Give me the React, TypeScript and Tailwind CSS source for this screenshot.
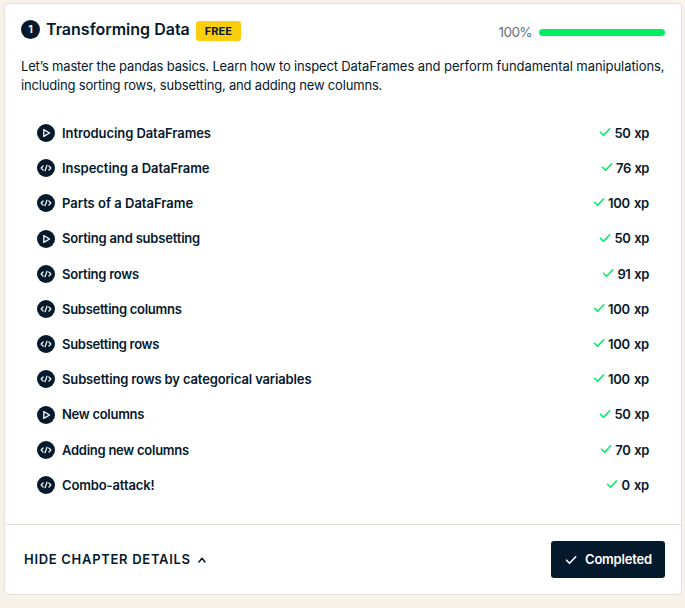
type Lesson = { title: string; xp: number; video?: boolean; fit: string; xpFit: string };

const lessons: Lesson[] = [
  { title: 'Introducing DataFrames', xp: 50, video: true, fit: 'tracking-[-0.08px]', xpFit: 'tracking-[-0.4px]' },
  { title: 'Inspecting a DataFrame', xp: 76, fit: 'tracking-[-0.04px]', xpFit: 'tracking-[-0.5px]' },
  { title: 'Parts of a DataFrame', xp: 100, fit: 'tracking-[0px]', xpFit: 'tracking-[-0.25px]' },
  { title: 'Sorting and subsetting', xp: 50, video: true, fit: 'tracking-[-0.19px]', xpFit: 'tracking-[-0.4px]' },
  { title: 'Sorting rows', xp: 91, fit: 'tracking-[-0.24px]', xpFit: 'tracking-[-0.4px]' },
  { title: 'Subsetting columns', xp: 100, fit: 'tracking-[-0.28px]', xpFit: 'tracking-[-0.25px]' },
  { title: 'Subsetting rows', xp: 100, fit: 'tracking-[-0.3px]', xpFit: 'tracking-[-0.25px]' },
  { title: 'Subsetting rows by categorical variables', xp: 100, fit: 'tracking-[-0.14px]', xpFit: 'tracking-[-0.25px]' },
  { title: 'New columns', xp: 50, video: true, fit: 'tracking-[-0.28px]', xpFit: 'tracking-[-0.4px]' },
  { title: 'Adding new columns', xp: 70, fit: 'tracking-[-0.26px]', xpFit: 'tracking-[-0.4px]' },
  { title: 'Combo-attack!', xp: 0, fit: 'tracking-[-0.13px]', xpFit: 'tracking-[-0.2px]' },
];

function LessonIcon({ video }: { video?: boolean }) {
  return (
    <svg className="mb-px size-[18px] shrink-0" viewBox="0 0 18 18" fill="none" stroke="white" strokeLinejoin="round" strokeLinecap="round">
      <circle cx="9" cy="9" r="9" fill="#05192d" stroke="none" />
      {video ? (
        <path d="M6.8 5.6v6.8L12.6 9z" strokeWidth="1.3" />
      ) : (
        <path d="M6.1 7 4.1 9l2 2M11.9 7 13.9 9l-2 2M10 6.2 8 11.8" strokeWidth="1.2" />
      )}
    </svg>
  );
}

function Check({ className }: { className: string }) {
  return (
    <svg className={className} viewBox="0 0 12 10" fill="none" stroke="currentColor" strokeWidth="1.6" strokeLinecap="round" strokeLinejoin="round">
      <path d="M1.5 5.2 4.5 8.2 10.7 1.8" />
    </svg>
  );
}

export default function App() {
  return (
    <div className="h-[608px] w-[685px] overflow-hidden bg-[#f7f3eb] pt-[3px] pl-1 font-['Inter',sans-serif] text-[#05192d]">
      <section className="flex h-[592px] w-[678px] flex-col rounded-[4px] border border-[#e5e1da] bg-white">
        <header className="flex h-[53px] items-start justify-between px-4 pt-4">
          <div className="flex items-start">
            <span className="flex size-[19px] items-center justify-center rounded-full bg-[#05192d] text-[11px] font-semibold text-white">1</span>
            <h1 className="-mt-px ml-1.5 text-[16px] leading-5 font-semibold whitespace-nowrap">Transforming Data</h1>
            <span className="ml-1.5 mt-px flex h-5 w-[45px] items-center justify-center rounded-[3px] bg-[#fcce0d] text-[11px] font-bold">FREE</span>
          </div>
          <div className="flex items-center pt-0.5">
            <span className="text-[13.5px] leading-5 tracking-[-0.6px] text-[#65707c]">100%</span>
            <span className="ml-[7px] h-[7px] w-[126px] rounded-full bg-[#03ef62]" />
          </div>
        </header>
        <p className="h-[59px] pl-4 text-[13px] leading-[19px] whitespace-nowrap">
          <span className="block">
            <span className="tracking-[-0.175px]">Let’s master the pandas basics. Learn how to inspect </span>
            <span className="tracking-[-0.065px]">DataFrames and perform fundamental manipulations,</span>
          </span>
          <span className="block tracking-[-0.18px]">including sorting rows, subsetting, and adding new columns.</span>
        </p>
        <ul className="flex flex-1 flex-col pr-8 pl-8">
          {lessons.map((l) => (
            <li key={l.title} className="flex h-[35.2px] items-center text-[13px] font-semibold whitespace-nowrap">
              <LessonIcon video={l.video} />
              <span className={`ml-[7px] ${l.fit}`}>{l.title}</span>
              <Check className="mr-[3.5px] mb-[3px] ml-auto h-[10px] w-3 text-[#03ef62]" />
              <span className={`[word-spacing:1px] ${l.xpFit}`}>{l.xp} xp</span>
            </li>
          ))}
        </ul>
        <footer className="flex h-[70px] items-center justify-between border-t border-[#e5e1da] pr-4 pl-[19px]">
          <button className="flex items-center text-[13px] font-semibold whitespace-nowrap">
            <span className="tracking-[0.7px]">HIDE CHAPTER DETAILS</span>
            <svg className="ml-[7px] h-[6px] w-2" viewBox="0 0 8 6" fill="none" stroke="currentColor" strokeWidth="1.5" strokeLinecap="round" strokeLinejoin="round">
              <path d="M1 5 4 1.3 7 5" />
            </svg>
          </button>
          <button className="flex h-[37px] w-[114px] items-center rounded-[3px] bg-[#05192d] pl-[14px] text-[13px] font-semibold text-white">
            <Check className="h-[10px] w-3" />
            <span className="ml-2 tracking-[-0.2px]">Completed</span>
          </button>
        </footer>
      </section>
    </div>
  );
}
